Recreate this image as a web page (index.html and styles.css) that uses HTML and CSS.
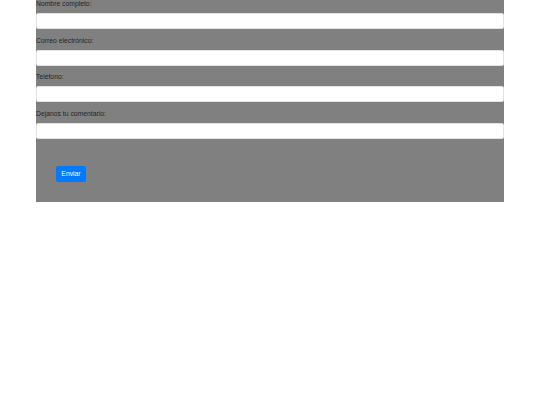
FILE: index.html
```html
<!DOCTYPE html>
<html lang="es">
<head>
<meta charset="utf-8">
<title>Formulario</title>
<link rel="stylesheet" href="styles.css">
</head>
<body>
<div class="container">
  <form class="form">
    <div class="group">
      <label class="label" for="nombre">Nombre completo:</label>
      <input class="input" id="nombre" type="text">
    </div>
    <div class="group">
      <label class="label" for="correo">Correo electrónico:</label>
      <input class="input" id="correo" type="email">
    </div>
    <div class="group">
      <label class="label" for="tel">Teléfono:</label>
      <input class="input" id="tel" type="tel">
    </div>
    <div class="group">
      <label class="label" for="com">Dejanos tu comentario:</label>
      <input class="input" id="com" type="text">
    </div>
    <div class="actions">
      <button class="btn" type="button">Enviar</button>
    </div>
  </form>
</div>
</body>
</html>
```
FILE: styles.css
```css
html, body {
  margin: 0;
  padding: 0;
  background: #ffffff;
}
body {
  font-family: "Liberation Sans", Arial, sans-serif;
}
.container {
  width: 468px;
  margin: 0 auto;
  background: #808080;
}
.form {
  margin: 0;
  display: flex;
  flex-direction: column;
}
.group {
  display: flex;
  flex-direction: column;
  margin-bottom: 7.5px;
}
.label {
  display: block;
  font-size: 6.8px;
  line-height: 8px;
  height: 13px;
  color: #262626;
}
.input {
  box-sizing: border-box;
  width: 100%;
  height: 16px;
  margin: 0;
  padding: 0 4px;
  border: 1px solid #e2e2e2;
  border-radius: 2px;
  background: #ffffff;
}
.actions {
  padding: 20px 20px 20px;
  display: flex;
}
.btn {
  box-sizing: border-box;
  height: 16px;
  width: 30px;
  padding: 0;
  border: 1px solid #007bff;
  border-radius: 2px;
  background: #007bff;
  color: #ffffff;
  font-family: "Liberation Sans", Arial, sans-serif;
  font-size: 6.8px;
  line-height: 14px;
}
```
